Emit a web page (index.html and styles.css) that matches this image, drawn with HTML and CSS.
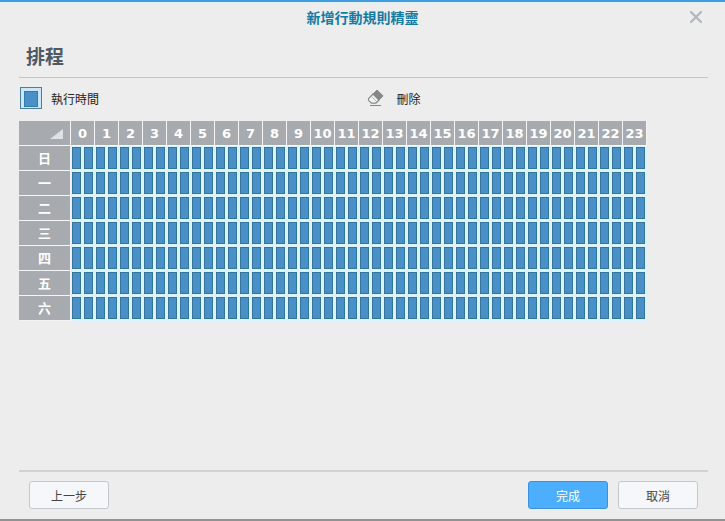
FILE: index.html
```html
<!DOCTYPE html>
<html lang="zh-Hant">
<head>
    <meta charset="UTF-8">
    <meta name="viewport" content="width=device-width, initial-scale=1.0">
    <title>新增行動規則精靈</title>
    <link rel="stylesheet" href="styles.css">
</head>
<body>
    <div class="wizard">
        <header class="titlebar">
            <h1>新增行動規則精靈</h1>
            <button type="button" class="close" aria-label="關閉">
                <svg width="14" height="14" viewBox="0 0 14 14">
                    <path d="M2 2L12 12M12 2L2 12" stroke="#b2b7bd" stroke-width="2.2" stroke-linecap="round"/>
                </svg>
            </button>
        </header>

        <main class="content">
            <h2>排程</h2>
            <div class="tools">
                <button type="button" class="tool">
                    <span class="swatch"></span>
                    執行時間
                </button>
                <button type="button" class="tool">
                    <svg class="eraser" width="24" height="22" viewBox="0 0 24 22">
                        <path d="M13 3L19 8.8L12.4 15.8L6.2 9.8Z" fill="#85888a" stroke="#85888a" stroke-linejoin="round"/>
                        <path d="M9 7L4.8 11.4Q4 12.6 4.8 13.6L7.4 16.2H11.6L15 13Z" fill="#f2f2f2" stroke="#85888a" stroke-width="1.2" stroke-linejoin="round"/>
                        <path d="M7.4 9.4L12.6 14.6" stroke="#b4b6b8" stroke-width="1"/>
                        <path d="M6 18.5H17" stroke="#85888a" stroke-width="1"/>
                    </svg>
                    刪除
                </button>
            </div>

            <table class="schedule">
                <thead>
                    <tr id="hours">
                        <th class="corner" aria-label="全選">
                            <svg width="13" height="10" viewBox="0 0 13 10"><path d="M13 0V10H0Z" fill="#dfe2e4"/></svg>
                        </th>
                    </tr>
                </thead>
                <tbody id="days"></tbody>
            </table>
        </main>

        <footer class="buttons">
            <button type="button" class="btn">上一步</button>
            <button type="button" class="btn primary">完成</button>
            <button type="button" class="btn">取消</button>
        </footer>
    </div>

    <script src="script.js"></script>
</body>
</html>
```
FILE: styles.css
```css
* {
    box-sizing: border-box;
}
body {
    margin: 0;
    font-family: "Liberation Sans", "Noto Sans CJK TC", sans-serif;
    font-size: 12px;
    color: #222;
    background-color: #ededed;
}
button {
    font: inherit;
    color: inherit;
    cursor: pointer;
}
.wizard {
    display: flex;
    flex-direction: column;
    min-height: 100vh;
    border-top: 2px solid #429be0;
    border-bottom: 2px solid #929292;
    box-shadow: inset 0 2px 0 #def3f8;
}
.titlebar {
    display: flex;
    justify-content: center;
    align-items: center;
    position: relative;
    height: 32px;
}
h1 {
    margin: 0;
    font-size: 14px;
    line-height: 20px;
    color: #117ba4;
}
.close {
    position: absolute;
    top: 8px;
    right: 22px;
    padding: 0;
    border: none;
    background: none;
}
.close svg {
    display: block;
}
.content {
    flex: 1;
    padding: 0 17px 0 19px;
}
h2 {
    margin: 0;
    padding: 10px 7px 5px;
    font-size: 19px;
    line-height: 28px;
    font-weight: bold;
    color: #4e5862;
    border-bottom: 1px solid #c6c6c6;
}
.tools {
    display: grid;
    grid-template-columns: 1fr 1fr;
    padding: 8px 1px;
}
.tool {
    display: flex;
    align-items: center;
    gap: 9px;
    height: 24px;
    padding: 0;
    border: none;
    background: none;
}
.swatch {
    width: 22px;
    height: 22px;
    border: 1px solid #4a7f9f;
    padding: 3px;
    background-color: #c9e7f7;
}
.swatch::before {
    content: "";
    display: block;
    height: 14px;
    border: 1px solid #397ba8;
    background-color: #4a90c8;
}
.schedule {
    table-layout: fixed;
    border-collapse: separate;
    border-spacing: 0;
    margin-top: 3px;
}
.schedule th {
    width: 24px;
    height: 25px;
    padding: 1px 0 0;
    border: solid #f4f5f6;
    border-width: 0 1px 1px 0;
    background-color: #a7abaf;
    color: #fff;
    font-family: "DejaVu Sans", "Noto Sans CJK TC", sans-serif;
    font-size: 13px;
    line-height: 23px;
}
.schedule th:first-child {
    width: 52px;
}
.schedule .corner {
    padding: 0 7px 0 0;
    text-align: right;
}
.corner svg {
    display: inline-block;
    vertical-align: middle;
}
.schedule td {
    width: 12px;
    height: 25px;
    padding: 1px 2px 2px 1px;
    background-color: #daf3fd;
}
.slot {
    display: block;
    height: 22px;
    border: 1px solid #35759c;
    background-color: #4a90c8;
}
.buttons {
    display: flex;
    gap: 10px;
    margin: 0 17px 0 19px;
    padding: 9px 10px 10px;
    border-top: 2px solid #d2d2d2;
}
.btn {
    width: 80px;
    height: 28px;
    padding: 0;
    border: 1px solid #c3c8ce;
    border-radius: 3px;
    background-color: #f5f7fb;
    color: #444;
}
.btn:first-child {
    margin-right: auto;
}
.btn.primary {
    border-color: #3b92dc;
    background-color: #4caefd;
    color: #fff;
}
```
FILE: script.js
```js
const days = ['日', '一', '二', '三', '四', '五', '六'];
const hoursRow = document.getElementById('hours');
const daysBody = document.getElementById('days');

for (let hour = 0; hour < 24; hour++) {
    const th = document.createElement('th');
    th.colSpan = 2;
    th.textContent = hour;
    hoursRow.appendChild(th);
}

// Two half-hour slots for each hour
days.forEach(day => {
    const row = document.createElement('tr');
    const th = document.createElement('th');
    th.textContent = day;
    row.appendChild(th);

    for (let i = 0; i < 48; i++) {
        const cell = document.createElement('td');
        const slot = document.createElement('span');
        slot.className = 'slot';
        cell.appendChild(slot);
        row.appendChild(cell);
    }
    daysBody.appendChild(row);
});
```
